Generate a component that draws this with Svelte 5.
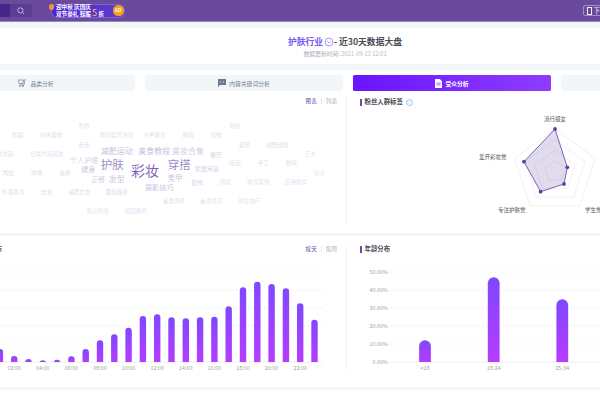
<script>
  const words = [
    ['影视',84,126.7,5.6,.18],['舞蹈',17.7,136.3,5.6,.18],['时尚其他',51,136.3,5.6,.18],['明星娱乐资讯',116.7,136.3,5.6,.18],['大学教育',154.3,136.3,5.6,.18],
    ['音乐',84,146,5.6,.22],['减肥运动',116.7,150.7,8,.34],['美食教程',154.3,150.7,8,.34],['美妆合集',188,150.7,8,.26],['零食品',5,155,5.6,.18],['日常片段其他',46.7,155,5.6,.18],
    ['个人护理',84,159.7,7,.24],['护肤',112.3,165,11.5,.6],['彩妆',145,169.7,14,.8],['穿搭',179.3,165,11.5,.6],['健身',88.3,169.3,7,.32],
    ['正餐',98,179,7,.26],['发型',116.7,179,8,.32],['两性',8.3,174,5.6,.18],['攻略',36.7,174,5.6,.18],['装修',65.3,174,5.6,.2],['美甲',175,178,7.5,.3],
    ['摄影技巧',159.3,188.3,7.2,.32],['外语教育',13.3,193,5.6,.16],['去处',46.7,193,5.6,.16],['减肥饮食',79.3,193,5.6,.18],['面包甜点',116.7,193,5.6,.2],['美食测评',174,202,5.6,.18],
    ['知识科普',98,211.7,5.6,.16],['校园教育',135.7,211.7,5.6,.16],['明星',235,126.7,5.6,.16],['箱包',188,136.3,5.6,.18],['宠物',216,136.3,5.6,.18],['其他',244.3,145.7,5.6,.18],
    ['减肥经验',277.3,145.7,5.6,.18],['餐厅',216,155,6,.24],['艺术',310.3,155,5.6,.14],['绘画',235,164.3,5.6,.18],['手工',263.3,164.3,5.6,.18],['数码',291.3,164.3,5.6,.18],
    ['家居用品',206.7,169.3,6,.24],['宿舍',319.7,174,5.6,.14],['配饰',197.3,183.3,6,.24],['阅读',225.3,183.3,5.6,.18],['教育其他',258.3,183.3,5.6,.16],['应用推荐',296,183.3,5.6,.16],
    ['美食探店',211.3,202.3,5.6,.16],['养生食疗',249,202.3,5.6,.16]
  ];
  const tops = [349,356,359,360.3,359.7,356.3,349,340.3,334.3,327.7,316,314.3,317.3,318.3,317.3,316.7,306.3,287.3,281.7,284,288.3,303.3,319.7];
  const base = 126;
  const rowTop = 236;
  const gy = v => v - rowTop;
  const bar = (cx, top, w) => {
    const r = w / 2, t = gy(top);
    return `M${cx - r} ${base}V${t + r}A${r} ${r} 0 0 1 ${cx + r} ${t + r}V${base}Z`;
  };
  const grid = [272,290,308,326,344].map(gy);
  const hours = tops.map((t, i) => ({ x: -14.4 + 14.3 * (i + 1), d: bar(-14.4 + 14.3 * (i + 1), t, 6.4), label: (i + 1) % 2 === 0 ? String(i + 1).padStart(2, '0') + ':00' : '' }));
  const ages = [['<18',425,340.3],['18-24',493.7,277.3],['25-34',562.3,299.3]].map(([label, x, t]) => ({ label, x: x - 346, d: bar(x - 346, t, 11.8) }));
  const yLabels = ['50.00%','40.00%','30.00%','20.00%','10.00%','0.00%'];
  const cx = 55, cy = 74.4, R = 42.4;
  const pent = s => [0,1,2,3,4].map(i => {
    const a = (i * 72 - 90) * Math.PI / 180;
    return (cx + R * s * Math.cos(a)).toFixed(1) + ',' + (cy + R * s * Math.sin(a)).toFixed(1);
  }).join(' ');
  const rings = [.25,.5,.75,1].map(pent);
  const pts = [[55,32],[67.3,70.3],[64,87],[40.6,94.7],[24,64.7]];
</script>

<div class="page">
  <header class="top">
    <div class="searchwrap">
      <div class="search">
        <svg width="8" height="8" viewBox="0 0 8 8" fill="none" stroke="#c9bfe0" stroke-width=".9"><circle cx="3.4" cy="3.4" r="2.6"/><path d="M5.4 5.4 7.2 7.2"/></svg>
      </div>
    </div>
    <div class="promo">
      <span class="balloon"></span>
      <div class="pill">
        <div class="ptext"><span>迎中秋 庆国庆</span><span>双节豪礼 鞋服 <b>5</b> 折</span></div>
        <span class="go">GO</span>
      </div>
    </div>
    <div class="dl"><span class="dlicon"></span>下载</div>
  </header>

  <section class="title">
    <h1><em>护肤行业</em>
      <svg width="10" height="10" viewBox="0 0 10 10" fill="none" stroke="#8a6cf0" stroke-width=".7"><circle cx="5" cy="5" r="3.9"/><path d="M3.2 4.3 5 6l1.8-1.7"/></svg>
      <span> - 近30天数据大盘</span></h1>
    <p><span class="k">数据更新时间:</span> 2021-09-13 12:01</p>
  </section>

  <section class="main">
    <nav class="tabs">
      <div class="tab">
        <svg width="9" height="8" viewBox="0 0 9 8" fill="none" stroke="#7b8798" stroke-width=".8"><path d="M0 1h5.5L5 4.5H1.2zM7 0 6 6H1.5"/><circle cx="2" cy="7" r=".6"/><circle cx="5" cy="7" r=".6"/></svg>
        品类分析
      </div>
      <div class="tab">
        <svg width="8" height="8" viewBox="0 0 8 8"><path d="M0 0h8v6H2L0 8z" fill="#6e7b8c"/><path d="M2.5 2.5v1M5.5 2.5v1" stroke="#fff" stroke-width=".8"/></svg>
        内容关键词分析
      </div>
      <div class="tab on">
        <svg width="7" height="9" viewBox="0 0 7 9"><path d="M0 0h4.8L7 2.2V9H0z" fill="#fff"/><path d="M1.5 4.2h4M1.5 6h4" stroke="#7a2cff" stroke-width=".7"/></svg>
        受众分析
      </div>
      <div class="tab"></div>
    </nav>
    <div class="panels">
      <div class="cloud">
        <div class="toggle"><b>图表</b><i></i><span>列表</span></div>
        {#each words as [t, x, y, s, o]}
          <span class="word" style="left:{x}px;top:{y - 97}px;font-size:{s}px;opacity:{o}">{t}</span>
        {/each}
      </div>
      <div class="tags">
        <h2 class="ph"><i></i>粉丝人群标签<span class="help">?</span></h2>
        <svg class="radar" width="110" height="125" viewBox="0 0 110 125">
          {#each rings as r}<polygon points={r} fill="none" stroke="#ececf0" stroke-width=".8"/>{/each}
          <polygon points={pts.map(p => p.join(',')).join(' ')} fill="#6a4aa8" fill-opacity=".2" stroke="#6f52ae" stroke-width=".9"/>
          {#each pts as p}<circle cx={p[0]} cy={p[1]} r="1.9" fill="#5d3ea5"/>{/each}
        </svg>
        <span class="rl" style="left:197px;top:18px">流行靓女</span>
        <span class="rl" style="left:132px;top:56px">爱开彩妆党</span>
        <span class="rl" style="left:151px;top:109px">专注护肤党</span>
        <span class="rl" style="left:238px;top:109px">学生党</span>
      </div>
    </div>
  </section>

  <section class="lower">
    <div class="lpanel">
      <h2 class="ph cut">分布</h2>
      <div class="toggle low"><b>按天</b><i></i><span>按周</span></div>
      <svg class="chart" width="346" height="151" viewBox="0 0 346 151">
        <defs><linearGradient id="g" x1="0" y1="0" x2="0" y2="1" gradientUnits="objectBoundingBox"><stop offset="0" stop-color="#7f48ff"/><stop offset="1" stop-color="#b63cff"/></linearGradient></defs>
        {#each grid as y}<line x1="0" x2="322" y1={y} y2={y} stroke="#e7e8ee" stroke-width=".7" stroke-dasharray="2 2"/>{/each}
        <line x1="0" x2="322" y1={base} y2={base} stroke="#e6e8ee" stroke-width=".8"/>
        {#each hours as h}
          <path d={h.d} fill="url(#g)"/>
          {#if h.label}<text x={h.x} y="134" class="ax" text-anchor="middle">{h.label}</text>{/if}
        {/each}
      </svg>
    </div>
    <div class="rpanel">
      <h2 class="ph"><i></i>年龄分布</h2>
      <svg class="chart" width="254" height="151" viewBox="0 0 254 151">
        {#each grid as y}<line x1="44" x2="254" y1={y} y2={y} stroke="#e7e8ee" stroke-width=".7" stroke-dasharray="2 2"/>{/each}
        <line x1="44" x2="254" y1={base} y2={base} stroke="#e6e8ee" stroke-width=".8"/>
        {#each yLabels as l, i}<text x="42" y={gy(272 + 18 * i) + 2} class="ax" text-anchor="end">{l}</text>{/each}
        {#each ages as a}
          <path d={a.d} fill="url(#g)"/>
          <text x={a.x} y="134" class="ax" text-anchor="middle">{a.label}</text>
        {/each}
      </svg>
    </div>
  </section>
</div>

<style>
  :global(body) { margin: 0; background: #fff; overflow: hidden; }
  .page { width: 600px; height: 400px; overflow: hidden; font-family: "Noto Sans CJK SC", "Noto Sans", sans-serif; background: #fff; }
  .top { height: 21px; background: #6a4a9b; border-bottom: 1px solid #9c86c2; display: flex; align-items: center; position: relative; }
  .searchwrap { width: 32px; height: 13px; background: #47268b; display: flex; justify-content: flex-end; }
  .search { width: 22px; height: 13px; background: #5b3e92; display: flex; align-items: center; justify-content: center; }
  .promo { margin-left: 17px; display: flex; align-items: center; position: relative; }
  .balloon { width: 5px; height: 6px; border-radius: 50%; background: #f09a3c; position: absolute; left: 0; top: 0; }
  .pill { margin-left: 2px; width: 74px; height: 14px; box-sizing: border-box; border-radius: 7px; background: linear-gradient(90deg, #4a22d8, #5f3fc8); border: 1px solid #7d63d0; display: flex; align-items: center; justify-content: space-between; color: #fff; }
  .ptext { display: flex; flex-direction: column; font-size: 5.6px; line-height: 6px; padding-left: 4px; font-weight: 700; white-space: nowrap; }
  .ptext b { color: #f0c060; font-size: 9px; line-height: 5px; font-weight: 400; }
  .go { width: 10.5px; height: 10.5px; border-radius: 50%; background: #f9a11b; font-size: 4.5px; line-height: 10.5px; text-align: center; font-weight: 700; margin-right: 0.5px; }
  .dl { margin-left: auto; margin-right: -12px; width: 29px; height: 11px; box-sizing: border-box; border: 1px solid #a48fcb; border-radius: 2px; color: #eee; font-size: 6.5px; line-height: 9px; display: flex; align-items: center; padding-left: 3px; gap: 1.5px; }
  .dlicon { width: 3px; height: 6px; border: 1px solid #eee; flex: none; }
  .title { margin-top: 6px; height: 36px; margin-bottom: 6px; padding-left: 90px; text-align: center; box-shadow: 0 -6px 0 #f3f6f9, 0 6px 0 #f3f6f9; background: #fff; }
  h1 { margin: 0; padding-top: 7px; font-size: 8.8px; line-height: 14px; font-weight: 700; color: #4c4c55; display: flex; justify-content: center; align-items: center; }
  h1 em { font-style: normal; color: #7a5cf0; }
  h1 svg { margin: 0 0 0 .5px; }
  h1 span { white-space: pre; }
  .title p { margin: 1px 0 0; font-size: 5.8px; line-height: 8px; color: #b8bcc6; }
  .title p .k { color: #a9adb8; }
  .main { height: 163px; }
  .tabs { display: grid; grid-template-columns: repeat(4, 198.4px); gap: 9.6px; margin-left: -63.2px; padding-top: 5px; width: 820px; }
  .tab { height: 16px; background: #f3f6f9; border-radius: 1.5px; display: flex; align-items: center; justify-content: center; gap: 3px; font-size: 5.8px; color: #76808e; }
  .on { background: linear-gradient(90deg, #6a14ff, #8e3dff); color: #fff; font-weight: 700; }
  .panels { display: flex; padding-top: 6px; }
  .cloud { width: 346px; height: 127px; border-right: 1px solid #f1f1f4; position: relative; }
  .word { position: absolute; transform: translate(-50%, -50%); color: #5f3b9f; white-space: nowrap; line-height: 1; }
  .toggle { position: absolute; right: 9px; top: 0; display: flex; align-items: center; gap: 4px; font-size: 5.6px; line-height: 8px; color: #a9b2c0; }
  .toggle b { color: #6a4aa8; font-weight: 400; }
  .toggle i { width: 1px; height: 6px; background: #e4e6ea; }
  .tags { position: relative; flex: 1; }
  .ph { position: absolute; margin: 0; font-size: 6.4px; line-height: 10px; color: #4a4a52; font-weight: 700; display: flex; align-items: center; white-space: nowrap; }
  .tags .ph { left: 12.5px; top: 0; }
  .ph i { width: 2px; height: 7px; background: #6c48b4; margin-right: 3px; }
  .help { width: 5px; height: 5px; border-radius: 50%; border: .7px solid #9cc3f5; color: #7fb0f0; font-size: 4px; line-height: 5px; text-align: center; margin-left: 3px; font-weight: 400; }
  .radar { position: absolute; left: 153px; top: 0; }
  .rl { position: absolute; font-size: 5.5px; line-height: 8px; color: #55555c; white-space: nowrap; }
  .lower { display: flex; height: 151px; margin-top: 3px; box-shadow: 0 -3px 0 #f4f6f8, 0 3px 0 #f4f6f8; position: relative; }
  .lpanel { position: relative; width: 346px; }
  .rpanel { position: relative; flex: 1; }
  .rpanel::before { content: ""; position: absolute; left: 0; top: 9px; height: 126px; width: 1px; background: #f1f1f4; }
  .rpanel .ph { left: 13.5px; top: 8px; }
  .cut { left: -11px; top: 8px; }
  .low { right: 9px; top: 9px; }
  .chart { display: block; }
  .ax { font-size: 5.4px; fill: #9aa3b2; }
</style>
